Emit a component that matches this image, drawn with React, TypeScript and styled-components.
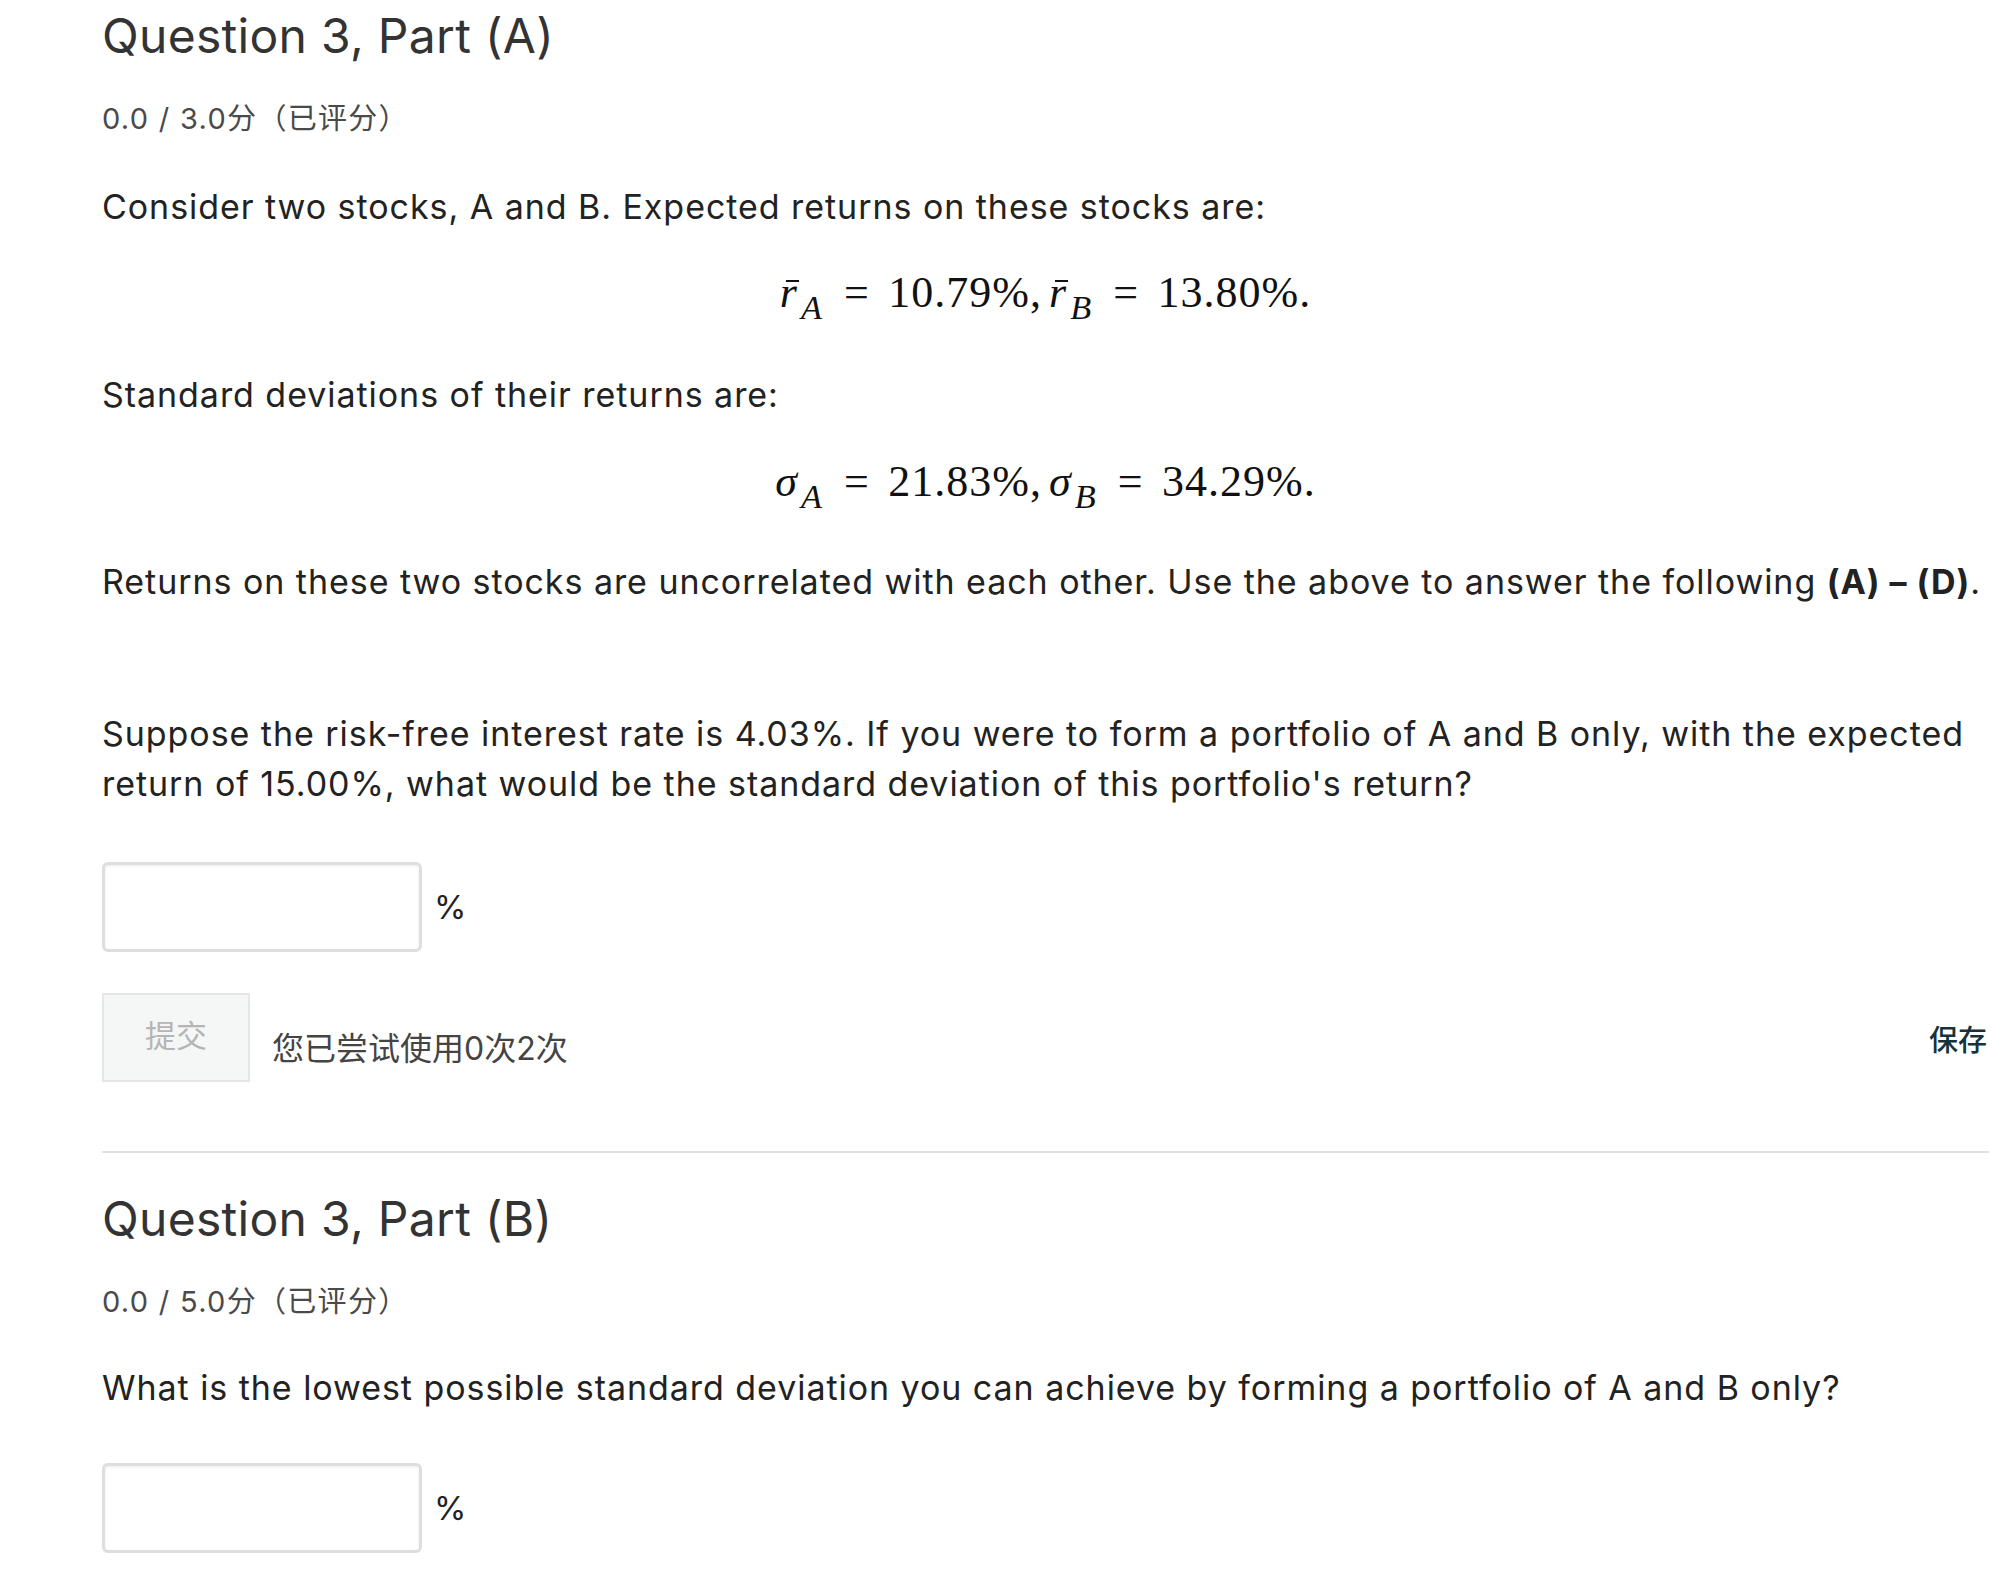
import React from 'react';
import styled, { createGlobalStyle } from 'styled-components';

const GlobalStyle = createGlobalStyle`
    body {
        margin: 0;
        background: #fff;
        font-family: Inter, "Noto Sans CJK SC", sans-serif;
        color: #222;
    }
`;

const Page = styled.div`
    padding: 0 17px 0 102px;
`;

const Section = styled.section`
    display: flex;
    flex-direction: column;
`;

const Title = styled.h2<{ $top: number }>`
    margin: ${(p) => p.$top}px 0 0;
    font-size: 48px;
    line-height: 58px;
    font-weight: 400;
    letter-spacing: 0.3px;
    color: #333;
`;

const Score = styled.div`
    margin-top: 34px;
    font-size: 29px;
    line-height: 40px;
    letter-spacing: 1.3px;
    color: #4a4a4a;
`;

const Text = styled.p<{ $top: number }>`
    margin: ${(p) => p.$top}px 0 0;
    font-size: 34px;
    line-height: 50px;
    letter-spacing: 0.95px;
    color: #222;
`;

const Math = styled.p<{ $top: number }>`
    margin: ${(p) => p.$top}px 0 0;
    text-align: center;
    font-family: "Liberation Serif", "DejaVu Serif", serif;
    font-size: 44px;
    line-height: 50px;
    letter-spacing: 1px;
    color: #111;
`;

const Var = styled.i`
    font-style: italic;
`;

const Barred = styled.i`
    position: relative;
    font-style: italic;

    &::after {
        content: '';
        position: absolute;
        left: 6px;
        width: 13px;
        top: 12px;
        height: 2px;
        background: #111;
    }
`;

const Sub = styled.span`
    display: inline-block;
    font-style: italic;
    font-size: 0.78em;
    transform: translateY(0.34em);
    margin-left: 3px;
`;

const Eq = styled.span`
    margin: 0 0.42em 0 0.48em;
`;

const Comma = styled.span`
    margin-right: 0.16em;
`;

const Strong = styled.b`
    font-weight: 700;
`;

const AnswerRow = styled.div<{ $top: number }>`
    margin-top: ${(p) => p.$top}px;
    display: flex;
    align-items: center;
    gap: 12px;
`;

const Input = styled.input`
    box-sizing: border-box;
    width: 320px;
    height: 90px;
    border: 3px solid #dedede;
    border-radius: 6px;
    box-shadow: inset 0 1px 3px rgba(0, 0, 0, 0.08);
    background: #fff;
    outline: none;
`;

const Unit = styled.span`
    font-size: 33px;
    color: #222;
`;

const ActionRow = styled.div`
    margin-top: 41px;
    display: flex;
    align-items: center;
`;

const SubmitButton = styled.button`
    box-sizing: border-box;
    width: 148px;
    height: 89px;
    background: #f5f6f6;
    border: 2px solid #e6e6e6;
    color: #b5b5b5;
    font-family: inherit;
    font-size: 31px;
    padding: 0 0 8px;
`;

const Attempts = styled.span`
    margin-left: 22px;
    margin-top: 16px;
    font-size: 32px;
    color: #444;
`;

const SaveButton = styled.button`
    margin-left: auto;
    margin-top: 0;
    background: none;
    border: none;
    padding: 0 2px 0 0;
    font-family: inherit;
    font-size: 29px;
    font-weight: 500;
    color: #16323a;
`;

const Divider = styled.hr`
    margin: 69px 0 0;
    border: none;
    border-top: 2px solid #e0e0e0;
`;

const App = () => (
    <Page>
        <GlobalStyle />
        <Section>
            <Title $top={7}>Question 3, Part (A)</Title>
            <Score>0.0 / 3.0分（已评分）</Score>
            <Text $top={43}>Consider two stocks, A and B. Expected returns on these stocks are:</Text>
            <Math $top={36}>
                <Barred>r</Barred><Sub>A</Sub><Eq>=</Eq>10.79%<Comma>,</Comma><Barred>r</Barred><Sub>B</Sub><Eq>=</Eq>13.80%.
            </Math>
            <Text $top={50}>Standard deviations of their returns are:</Text>
            <Math $top={37}>
                <Var>σ</Var><Sub>A</Sub><Eq>=</Eq>21.83%<Comma>,</Comma><Var>σ</Var><Sub>B</Sub><Eq>=</Eq>34.29%.
            </Math>
            <Text $top={48}>
                Returns on these two stocks are uncorrelated with each other. Use the above to answer the following <Strong>(A) – (D)</Strong>.
            </Text>
            <Text $top={102}>
                Suppose the risk-free interest rate is 4.03%. If you were to form a portfolio of A and B only, with the expected return of 15.00%, what would be the standard deviation of this portfolio's return?
            </Text>
            <AnswerRow $top={53}>
                <Input type="text" />
                <Unit>%</Unit>
            </AnswerRow>
            <ActionRow>
                <SubmitButton>提交</SubmitButton>
                <Attempts>您已尝试使用0次2次</Attempts>
                <SaveButton>保存</SaveButton>
            </ActionRow>
        </Section>
        <Divider />
        <Section>
            <Title $top={37}>Question 3, Part (B)</Title>
            <Score>0.0 / 5.0分（已评分）</Score>
            <Text $top={41}>What is the lowest possible standard deviation you can achieve by forming a portfolio of A and B only?</Text>
            <AnswerRow $top={50}>
                <Input type="text" />
                <Unit>%</Unit>
            </AnswerRow>
        </Section>
    </Page>
);

export default App;
